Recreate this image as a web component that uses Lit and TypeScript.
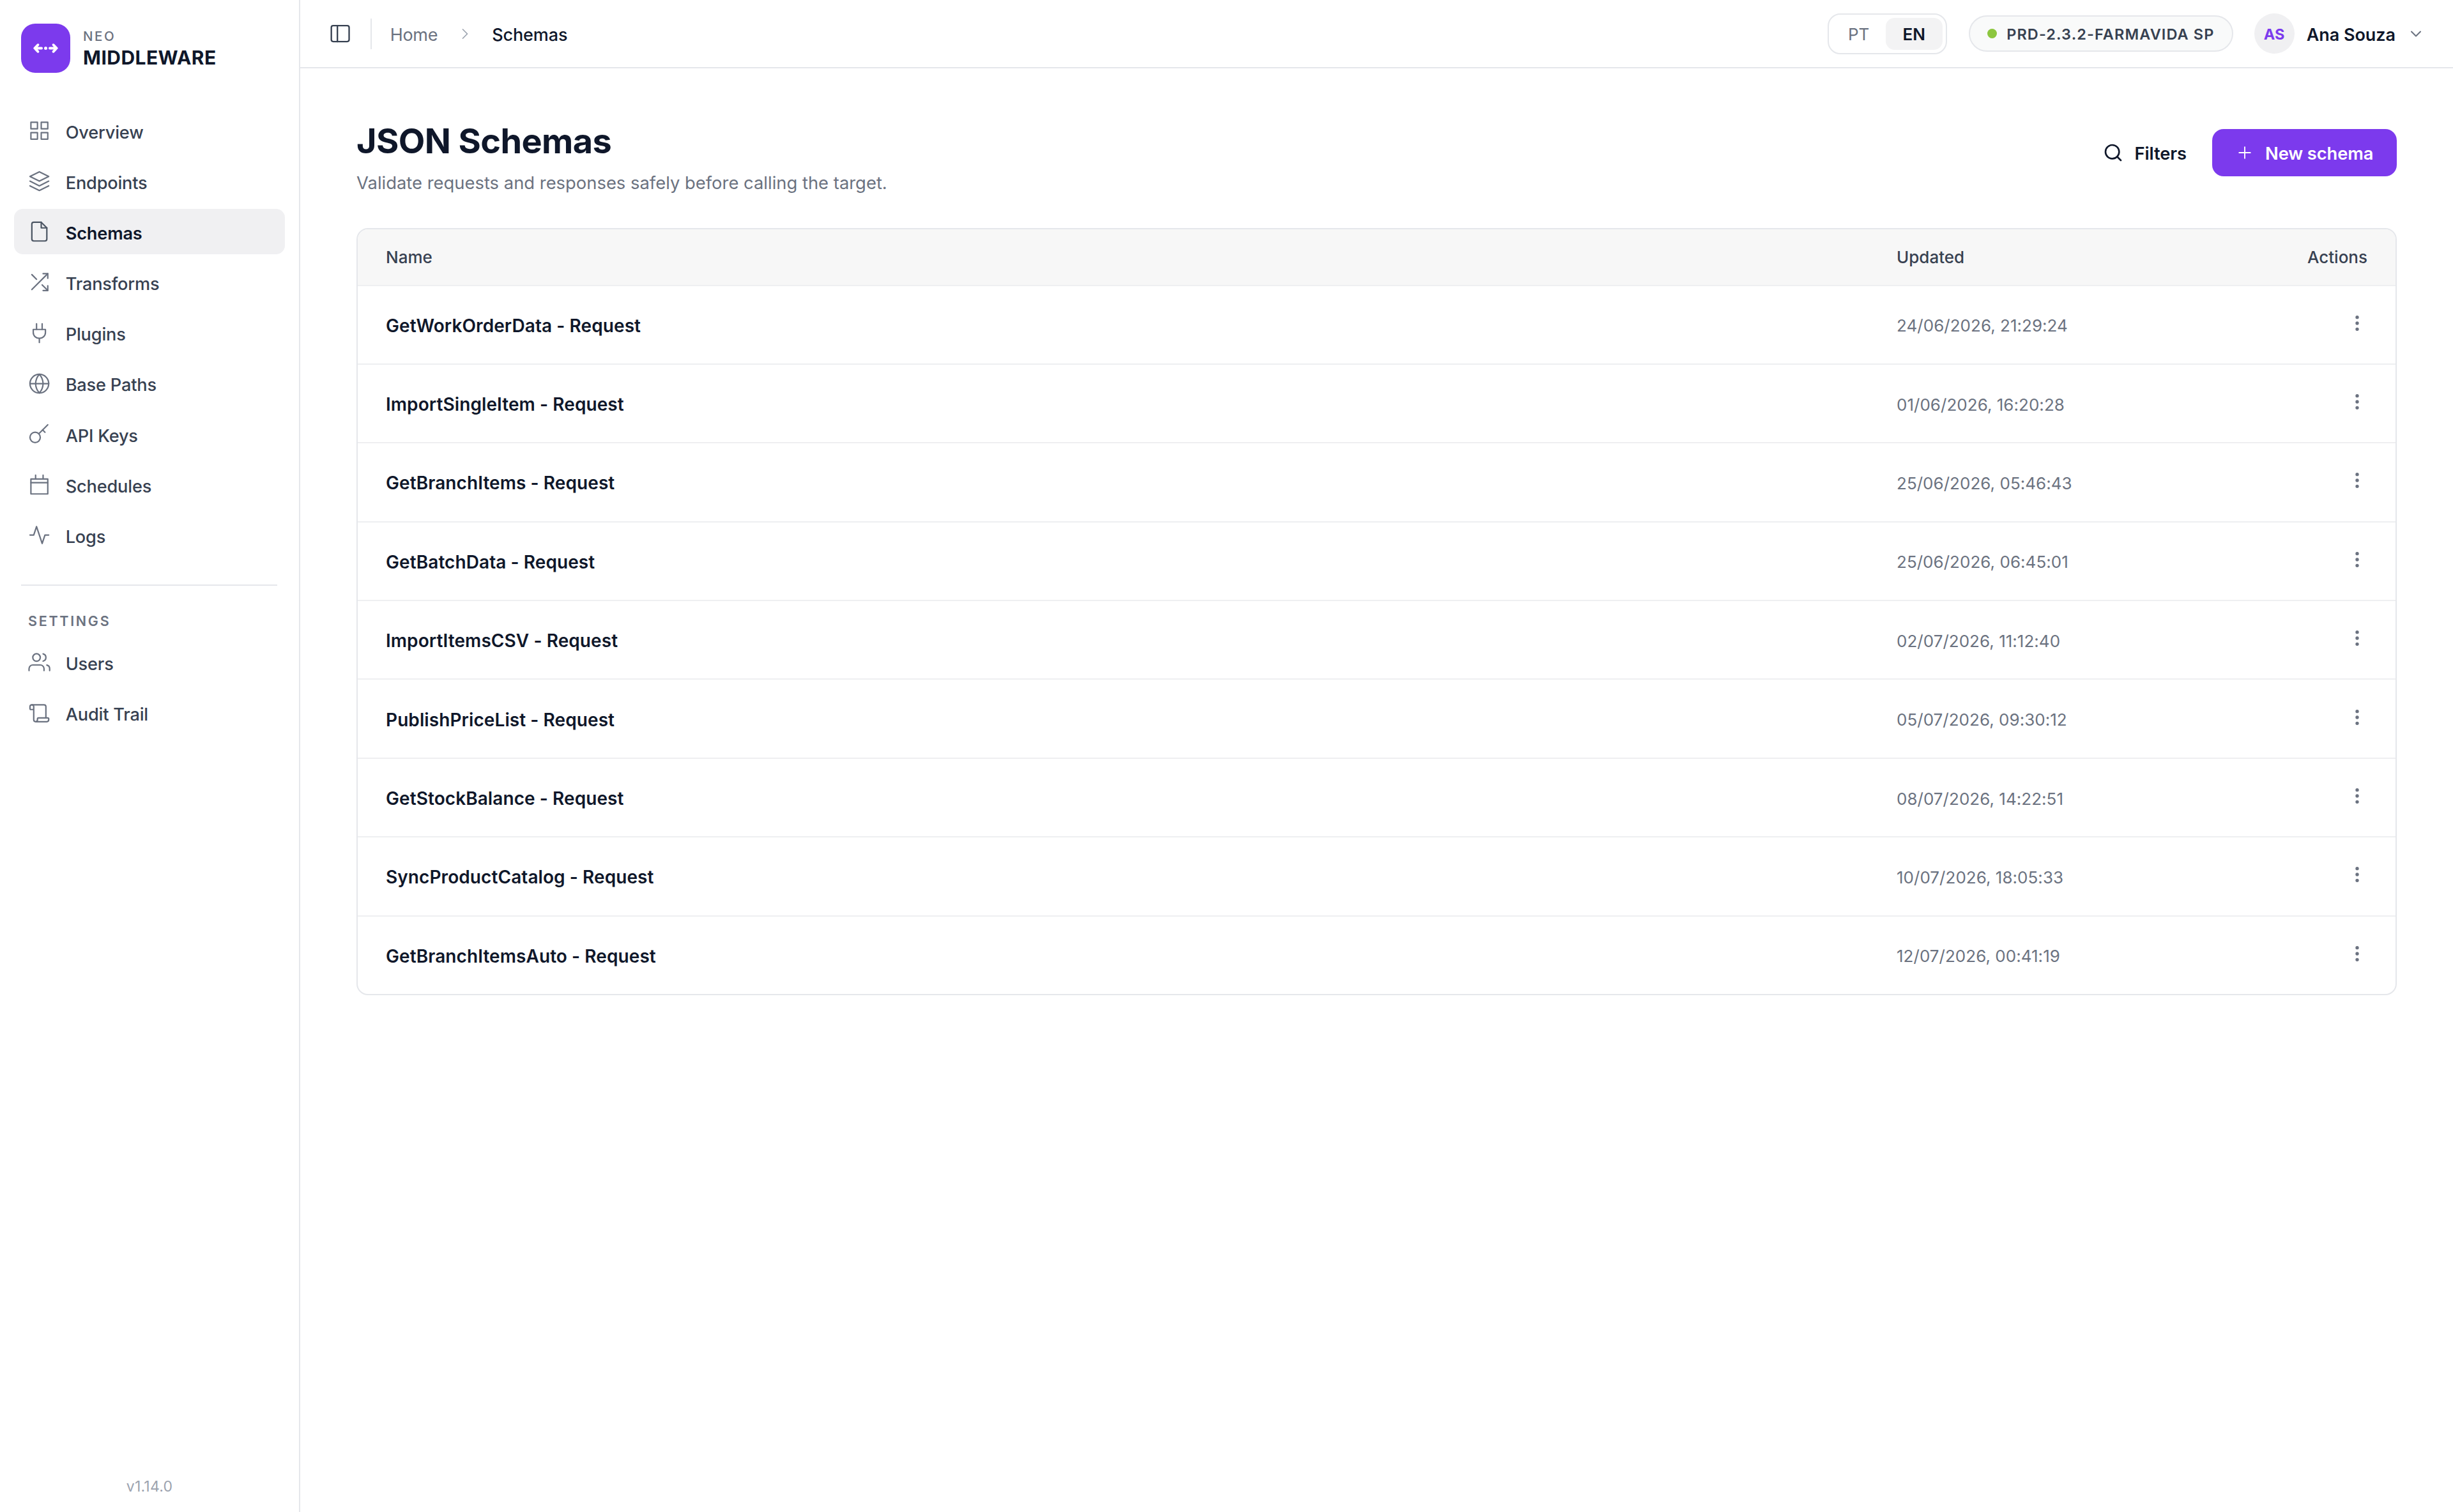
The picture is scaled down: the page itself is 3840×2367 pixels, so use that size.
import { LitElement, html, svg, css } from 'lit';
import type { SVGTemplateResult } from 'lit';
import { customElement, property } from 'lit/decorators.js';
import { classMap } from 'lit/directives/class-map.js';

// Stroke icons, all on a 24 unit grid
const icons: Record<string, SVGTemplateResult> = {
  grid: svg`<rect x="3" y="3" width="7" height="7"/><rect x="14" y="3" width="7" height="7"/><rect x="14" y="14" width="7" height="7"/><rect x="3" y="14" width="7" height="7"/>`,
  layers: svg`<path d="M12 2 2 7l10 5 10-5-10-5z"/><path d="m2 12 10 5 10-5"/><path d="m2 17 10 5 10-5"/>`,
  file: svg`<path d="M14 2H6a2 2 0 0 0-2 2v16a2 2 0 0 0 2 2h12a2 2 0 0 0 2-2V8z"/><path d="M14 2v6h6"/>`,
  shuffle: svg`<path d="M16 3h5v5"/><path d="M4 20 21 3"/><path d="M21 16v5h-5"/><path d="m15 15 6 6"/><path d="m4 4 5 5"/>`,
  plug: svg`<path d="M12 22v-4"/><path d="M9 8V2"/><path d="M15 8V2"/><path d="M5.5 8h13v3.5a6.5 6 0 0 1-13 0z"/>`,
  globe: svg`<circle cx="12" cy="12" r="10"/><path d="M2 12h20"/><path d="M12 2a15.3 15.3 0 0 1 4 10 15.3 15.3 0 0 1-4 10 15.3 15.3 0 0 1-4-10 15.3 15.3 0 0 1 4-10z"/>`,
  key: svg`<circle cx="7.5" cy="15.5" r="5.5"/><path d="M11.4 11.6 21 2"/><path d="m15.5 7.5 2.5 2.5"/>`,
  calendar: svg`<rect x="3" y="6" width="18" height="16"/><path d="M16 2v4"/><path d="M8 2v4"/><path d="M3 10h18"/>`,
  activity: svg`<path d="M22 12h-4l-3 9L9 3l-3 9H2"/>`,
  users: svg`<path d="M17 21v-2a4 4 0 0 0-4-4H5a4 4 0 0 0-4 4v2"/><circle cx="9" cy="7" r="4"/><path d="M23 21v-2a4 4 0 0 0-3-3.87"/><path d="M16 3.13a4 4 0 0 1 0 7.75"/>`,
  scroll: svg`<path d="M19 17V5a2 2 0 0 0-2-2H4"/><path d="M8 21h12a2 2 0 0 0 2-2v-1a1 1 0 0 0-1-1H11a1 1 0 0 0-1 1v1a2 2 0 1 1-4 0V5a2 2 0 1 0-4 0v2a1 1 0 0 0 1 1h3"/>`,
  panel: svg`<rect x="2.5" y="3.5" width="19" height="17" rx="2"/><path d="M9 3.5v17"/>`,
  chevronRight: svg`<path d="m9 18 6-6-6-6"/>`,
  chevronDown: svg`<path d="m6 9 6 6 6-6"/>`,
  search: svg`<circle cx="11" cy="11" r="8"/><path d="m21 21-4.35-4.35"/>`,
  plus: svg`<path d="M5 12h14"/><path d="M12 5v14"/>`,
  dots: svg`<circle cx="12" cy="5" r="1"/><circle cx="12" cy="12" r="1"/><circle cx="12" cy="19" r="1"/>`,
};

const mainNav = [
  { icon: 'grid', label: 'Overview' },
  { icon: 'layers', label: 'Endpoints' },
  { icon: 'file', label: 'Schemas' },
  { icon: 'shuffle', label: 'Transforms' },
  { icon: 'plug', label: 'Plugins' },
  { icon: 'globe', label: 'Base Paths' },
  { icon: 'key', label: 'API Keys' },
  { icon: 'calendar', label: 'Schedules' },
  { icon: 'activity', label: 'Logs' },
];

const settingsNav = [
  { icon: 'users', label: 'Users' },
  { icon: 'scroll', label: 'Audit Trail' },
];

const schemas = [
  { name: 'GetWorkOrderData - Request', updated: '24/06/2026, 21:29:24' },
  { name: 'ImportSingleItem - Request', updated: '01/06/2026, 16:20:28' },
  { name: 'GetBranchItems - Request', updated: '25/06/2026, 05:46:43' },
  { name: 'GetBatchData - Request', updated: '25/06/2026, 06:45:01' },
  { name: 'ImportItemsCSV - Request', updated: '02/07/2026, 11:12:40' },
  { name: 'PublishPriceList - Request', updated: '05/07/2026, 09:30:12' },
  { name: 'GetStockBalance - Request', updated: '08/07/2026, 14:22:51' },
  { name: 'SyncProductCatalog - Request', updated: '10/07/2026, 18:05:33' },
  { name: 'GetBranchItemsAuto - Request', updated: '12/07/2026, 00:41:19' },
];

@customElement('app-icon')
export class AppIcon extends LitElement {
  @property({ type: String }) name = '';

  static styles = css`
    :host {
      display: block;
      flex: none;
      width: 35.2px;
      height: 35.2px;
    }

    svg {
      display: block;
      width: 100%;
      height: 100%;
      fill: none;
      stroke: currentColor;
      stroke-width: var(--icon-stroke, 1.5);
      stroke-linecap: round;
      stroke-linejoin: round;
      overflow: visible;
    }
  `;

  render() {
    return html`<svg viewBox="0 0 24 24">${icons[this.name]}</svg>`;
  }
}

@customElement('side-bar')
export class SideBar extends LitElement {
  @property({ type: String }) active = '';

  static styles = css`
    :host {
      display: flex;
      flex-direction: column;
      box-sizing: border-box;
      width: 470px;
      border-right: 2px solid #e5e7eb;
      padding: 37px 22px 0;
    }

    .brand {
      display: flex;
      align-items: center;
      gap: 20px;
      padding: 0 11px;
      height: 77px;
    }

    .logo {
      width: 77px;
      height: 77px;
      border-radius: 22px;
      background: #7c3aed;
    }

    .logo svg {
      display: block;
    }

    .brand-top {
      font-size: 20.5px;
      line-height: 26px;
      font-weight: 500;
      letter-spacing: 2.6px;
      color: #6b7280;
      margin-top: 4px;
    }

    .brand-name {
      font-size: 30px;
      line-height: 41px;
      font-weight: 700;
      letter-spacing: 0.45px;
      color: #0f172a;
    }

    .nav {
      display: flex;
      flex-direction: column;
      gap: 8.2px;
    }

    .main {
      margin-top: 55px;
    }

    .item {
      display: flex;
      align-items: center;
      gap: 23.5px;
      height: 71px;
      box-sizing: border-box;
      padding: 0 22px;
      border-radius: 14px;
      font-size: 27.2px;
      font-weight: 500;
      letter-spacing: -0.2px;
      color: #374151;
    }

    .item span {
      padding-top: 5px;
    }

    app-icon {
      color: #6b7280;
    }

    .item.active {
      background: #f0f0f2;
      color: #0f172a;
      font-weight: 600;
    }

    .active app-icon {
      color: #4b5563;
    }

    .divider {
      flex: none;
      height: 2px;
      margin: 41px 12px 0 11px;
      background: #e5e7eb;
    }

    .heading {
      margin-top: 40px;
      padding-left: 22px;
      font-size: 21.5px;
      line-height: 30px;
      font-weight: 600;
      letter-spacing: 2.7px;
      color: #6b7280;
    }

    .settings {
      margin-top: 15px;
    }

    .version {
      margin-top: auto;
      padding-bottom: 26px;
      text-align: center;
      font-size: 23px;
      line-height: 28px;
      letter-spacing: 0.2px;
      color: #9ca3af;
    }
  `;

  renderItem(item: { icon: string; label: string }) {
    return html`
      <div class=${classMap({ item: true, active: item.label === this.active })}>
        <app-icon name=${item.icon}></app-icon>
        <span>${item.label}</span>
      </div>
    `;
  }

  render() {
    return html`
      <div class="brand">
        <div class="logo">
          <svg width="77" height="77" viewBox="0 0 77 77" fill="none" stroke="#fff" stroke-width="3.8" stroke-linecap="round" stroke-linejoin="round">
            <path d="M26.5 33.2l-5.3 5.3 5.3 5.3M21.5 38.5h10.6"/>
            <path d="M50.5 33.2l5.3 5.3-5.3 5.3M55.5 38.5h-10.6"/>
            <circle cx="38.5" cy="38.5" r="2.5" fill="#fff" stroke="none"/>
          </svg>
        </div>
        <div>
          <div class="brand-top">NEO</div>
          <div class="brand-name">MIDDLEWARE</div>
        </div>
      </div>
      <div class="nav main">${mainNav.map((item) => this.renderItem(item))}</div>
      <div class="divider"></div>
      <div class="heading">SETTINGS</div>
      <div class="nav settings">${settingsNav.map((item) => this.renderItem(item))}</div>
      <div class="version">v1.14.0</div>
    `;
  }
}

@customElement('top-bar')
export class TopBar extends LitElement {
  static styles = css`
    :host {
      display: flex;
      align-items: center;
      box-sizing: border-box;
      height: 107px;
      border-bottom: 2px solid #e5e7eb;
      padding: 0 44px 0 44.5px;
      font-size: 27px;
      color: #0f172a;
    }

    .toggle {
      color: #374151;
      --icon-stroke: 1.6;
    }

    .separator {
      width: 2px;
      height: 48px;
      margin: 0 29px 0 30px;
      background: #e5e7eb;
    }

    .home {
      color: #6b7280;
      letter-spacing: -0.3px;
    }

    .crumb {
      padding-top: 3px;
    }

    .arrow {
      width: 28px;
      height: 28px;
      margin: 0 28px 0 29px;
      color: #9ca3af;
    }

    .current {
      font-weight: 500;
      letter-spacing: -0.1px;
    }

    .right {
      display: flex;
      align-items: center;
      margin-left: auto;
    }

    .language {
      display: flex;
      box-sizing: border-box;
      width: 187px;
      height: 64px;
      border: 2px solid #e5e7eb;
      border-radius: 20px;
      padding: 5px;
      font-size: 26px;
      line-height: 52px;
      text-align: center;
      color: #6b7280;
    }

    .language div {
      flex: 1;
      border-radius: 14px;
    }

    .language .selected {
      flex: none;
      width: 89px;
      background: #f3f3f4;
      color: #0f172a;
      font-weight: 600;
    }

    .environment {
      display: flex;
      align-items: center;
      gap: 15.5px;
      box-sizing: border-box;
      width: 414px;
      height: 57px;
      margin-left: 34px;
      padding-left: 27px;
      border: 2px solid #e5e7eb;
      border-radius: 29px;
      background: #f9fafa;
      font-size: 23.5px;
      font-weight: 600;
      letter-spacing: 1.1px;
      white-space: nowrap;
      color: #374151;
    }

    .environment span {
      padding-top: 2px;
    }

    .dot {
      width: 15px;
      height: 15px;
      border-radius: 50%;
      background: #8cc63f;
    }

    .avatar {
      width: 63px;
      height: 63px;
      margin-left: 33px;
      border-radius: 50%;
      background: #f0f0f2;
      color: #7c3aed;
      font-size: 23.5px;
      font-weight: 700;
      line-height: 65px;
      text-align: center;
    }

    .user {
      margin-left: 19px;
      padding-top: 3px;
      font-weight: 600;
      letter-spacing: -0.05px;
    }

    .caret {
      width: 28px;
      height: 28px;
      margin-left: 18px;
      color: #6b7280;
      --icon-stroke: 1.8;
    }
  `;

  render() {
    return html`
      <app-icon class="toggle" name="panel"></app-icon>
      <div class="separator"></div>
      <div class="crumb home">Home</div>
      <app-icon class="arrow" name="chevronRight"></app-icon>
      <div class="crumb current">Schemas</div>
      <div class="right">
        <div class="language">
          <div>PT</div>
          <div class="selected">EN</div>
        </div>
        <div class="environment">
          <div class="dot"></div>
          <span>PRD-2.3.2-FARMAVIDA SP</span>
        </div>
        <div class="avatar">AS</div>
        <div class="user">Ana Souza</div>
        <app-icon class="caret" name="chevronDown"></app-icon>
      </div>
    `;
  }
}

@customElement('schema-table')
export class SchemaTable extends LitElement {
  static styles = css`
    :host {
      display: block;
      border: 2px solid #e5e7eb;
      border-radius: 18px;
      overflow: hidden;
    }

    .row {
      display: grid;
      grid-template-columns: 2365px 1fr auto;
      align-items: center;
      box-sizing: border-box;
      height: 123.4px;
      padding: 0 44px;
      border-top: 2px solid #eeeff1;
    }

    .head {
      height: 86.5px;
      border-top: none;
      background: #f7f7f7;
      font-size: 26px;
      font-weight: 500;
      color: #374151;
    }

    .name {
      padding-top: 3px;
      font-size: 28px;
      font-weight: 600;
      letter-spacing: 0.08px;
      color: #0f172a;
    }

    .updated {
      padding-top: 3px;
      font-size: 26px;
      letter-spacing: 0.03px;
      color: #6b7280;
    }

    .menu {
      width: 32px;
      height: 32px;
      margin-bottom: 5px;
      color: #6b7280;
      --icon-stroke: 2;
    }
  `;

  render() {
    return html`
      <div class="row head">
        <div>Name</div>
        <div>Updated</div>
        <div>Actions</div>
      </div>
      ${schemas.map(
        (schema) => html`
          <div class="row">
            <div class="name">${schema.name}</div>
            <div class="updated">${schema.updated}</div>
            <app-icon class="menu" name="dots"></app-icon>
          </div>
        `
      )}
    `;
  }
}

@customElement('app-root')
export class AppRoot extends LitElement {
  static styles = css`
    :host {
      display: grid;
      grid-template-columns: 470px 1fr;
      height: 100vh;
      overflow: hidden;
      background: #fff;
      font-family: Inter, 'Liberation Sans', sans-serif;
    }

    .page {
      padding: 81px 88px 0;
    }

    .header {
      display: flex;
      align-items: flex-start;
      justify-content: space-between;
      height: 124px;
      margin-bottom: 45px;
    }

    .title {
      margin: 0;
      font-size: 54px;
      line-height: 66px;
      font-weight: 700;
      letter-spacing: -0.6px;
      color: #0f172a;
    }

    .subtitle {
      margin: 12px 0 0;
      font-size: 27.4px;
      line-height: 40px;
      color: #6b7280;
    }

    .actions {
      display: flex;
      align-items: center;
      margin-top: 14px;
      font-size: 27.3px;
      font-weight: 600;
      letter-spacing: -0.1px;
      color: #0f172a;
    }

    .actions span {
      padding-top: 2px;
    }

    .filters {
      display: flex;
      align-items: center;
      gap: 18px;
      margin-right: 40px;
    }

    .filters app-icon {
      width: 32px;
      height: 32px;
      --icon-stroke: 2;
    }

    .create {
      display: flex;
      align-items: center;
      gap: 17px;
      box-sizing: border-box;
      width: 289px;
      height: 74px;
      padding-left: 36px;
      border-radius: 18px;
      background: #7c3aed;
      color: #fff;
    }

    .create app-icon {
      width: 30px;
      height: 30px;
    }
  `;

  render() {
    return html`
      <side-bar active="Schemas"></side-bar>
      <main>
        <top-bar></top-bar>
        <div class="page">
          <div class="header">
            <div>
              <h1 class="title">JSON Schemas</h1>
              <p class="subtitle">Validate requests and responses safely before calling the target.</p>
            </div>
            <div class="actions">
              <div class="filters">
                <app-icon name="search"></app-icon>
                <span>Filters</span>
              </div>
              <div class="create">
                <app-icon name="plus"></app-icon>
                <span>New schema</span>
              </div>
            </div>
          </div>
          <schema-table></schema-table>
        </div>
      </main>
    `;
  }
}
